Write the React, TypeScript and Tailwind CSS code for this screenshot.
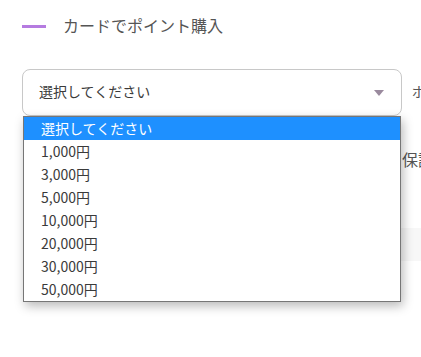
import React from 'react';

const amounts = ['1,000円', '3,000円', '5,000円', '10,000円', '20,000円', '30,000円', '50,000円'];

export default function App() {
    return (
        <div className="relative w-[421px] h-[357px] overflow-hidden bg-white text-[#333] font-['Noto_Sans_CJK_JP','Noto_Sans',sans-serif]">
            {/* Section title */}
            <div className="flex items-center gap-[17px] pl-[22px] pt-[14px] h-[37px]">
                <span className="block w-6 h-[3px] bg-[#b57be0] mt-[1px]" />
                <h2 className="text-base leading-[22px] text-[#555] whitespace-nowrap -mt-[2px]">カードでポイント購入</h2>
            </div>

            {/* Select row */}
            <div className="flex items-center mt-[32px] pl-[22px] whitespace-nowrap">
                <div className="flex items-center justify-between shrink-0 w-[380px] h-[47px] rounded-lg border border-[#c8c8c8] bg-white pl-[16px] pr-[16px] pb-[3px]">
                    <span className="text-sm text-[#3a3a3a]">選択してください</span>
                    <svg width="10" height="6" viewBox="0 0 10 6" className="mr-[1px] mt-[3px]">
                        <path d="M0 0 L10 0 L5 6 Z" fill="#9a8a9e" />
                    </svg>
                </div>
                <span className="ml-[10px] text-sm text-[#555] -mt-[3px]">ポイント</span>
            </div>

            {/* Rows hidden behind the open list */}
            <div className="flex justify-end mt-[32px] whitespace-nowrap">
                <span className="w-[19px] overflow-hidden text-base leading-[22px] text-[#555]">保証</span>
            </div>
            <div className="flex justify-end mt-[58px]">
                <div className="w-[20px] h-[33px] bg-[#f7f7f7]" />
            </div>

            {/* Open dropdown list */}
            <ul className="absolute left-[23px] top-[116px] w-[378px] border border-[#767676] bg-white text-[#3a3a3a] shadow-[2px_4px_10px_rgba(0,0,0,0.28)]">
                <li className="h-[23px] pl-[17px] text-sm leading-[23px] bg-[#1e90ff] text-white">選択してください</li>
                {amounts.map((a) => (
                    <li key={a} className="h-[23px] pl-[17px] text-sm leading-[23px]">
                        {a}
                    </li>
                ))}
            </ul>
        </div>
    );
}
